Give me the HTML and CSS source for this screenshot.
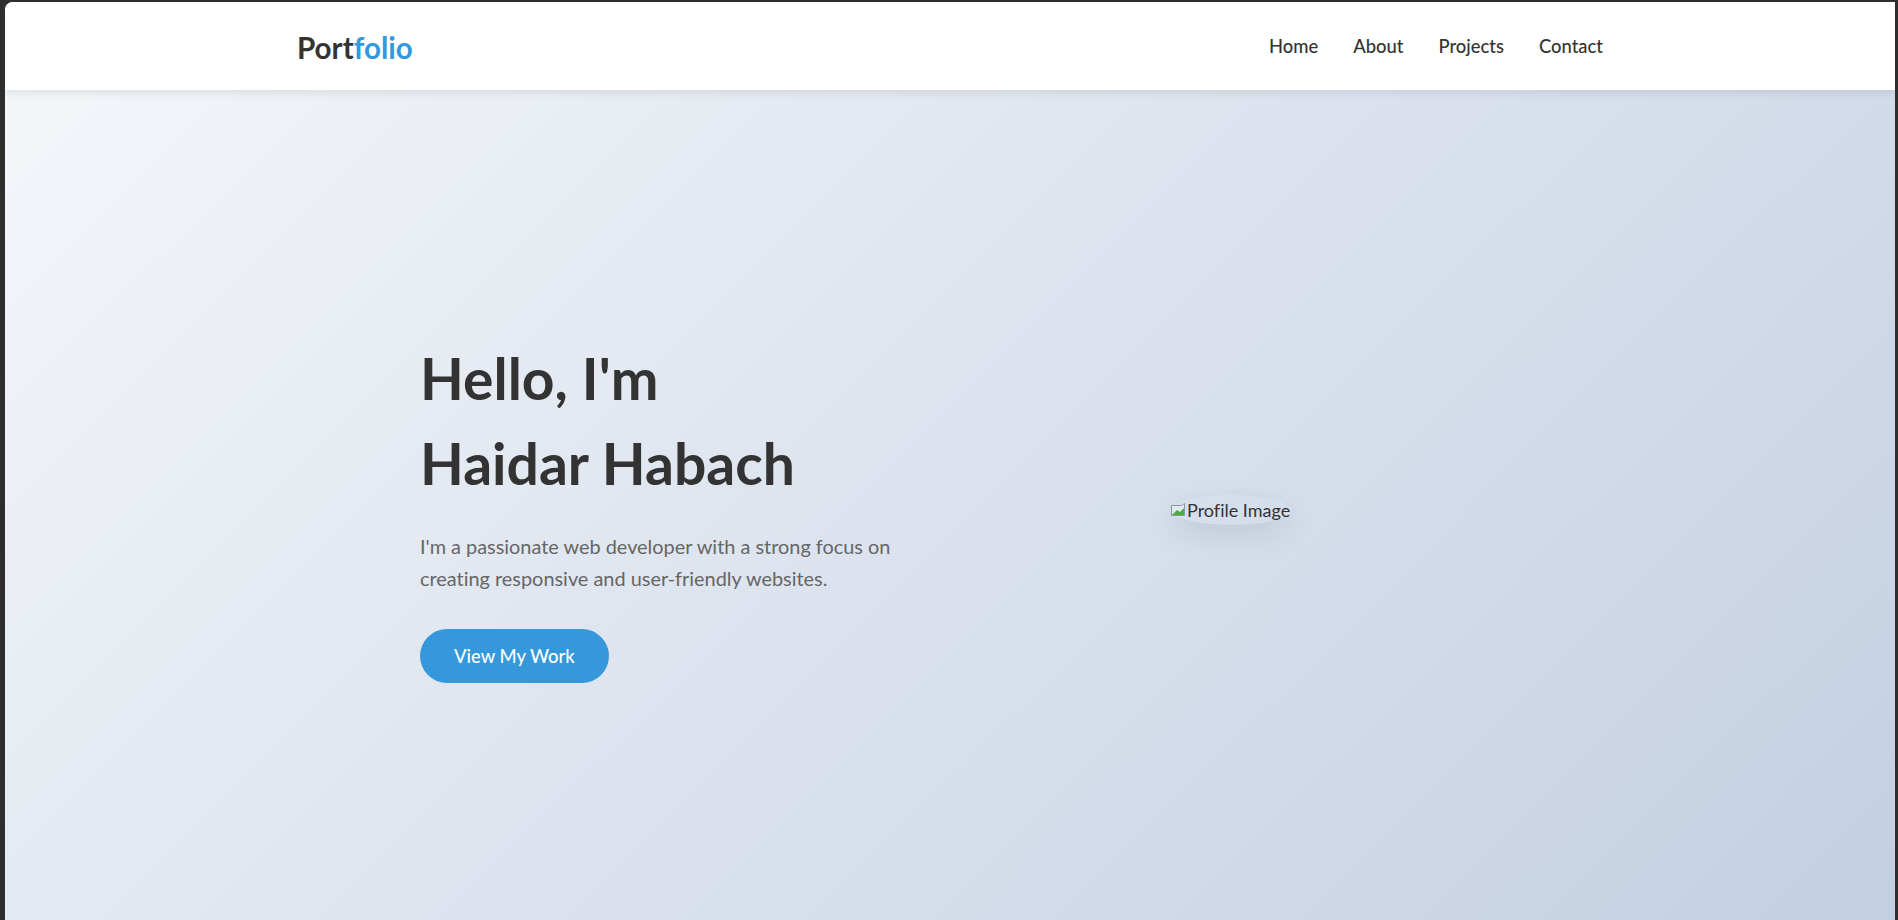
FILE: index.html
```html
<!DOCTYPE html>
<html lang="en">
<head>
<meta charset="utf-8">
<title>Portfolio</title>
<link rel="stylesheet" href="styles.css">
</head>
<body>
<div class="window">
  <header class="site-header">
    <div class="header-inner">
      <a class="logo" href="#">Port<span>folio</span></a>
      <nav class="nav">
        <a href="#">Home</a>
        <a href="#">About</a>
        <a href="#">Projects</a>
        <a href="#">Contact</a>
      </nav>
    </div>
  </header>
  <section class="hero">
    <div class="hero-inner">
      <div class="hero-text">
        <h1><span>Hello, I'm</span><span>Haidar Habach</span></h1>
        <p>I'm a passionate web developer with a strong focus on creating responsive and user-friendly websites.</p>
        <a class="btn" href="#">View My Work</a>
      </div>
      <div class="hero-image">
        <div class="profile">
          <svg class="broken" width="16" height="16" viewBox="0 0 16 16">
            <path d="M1.5 3.5h10l3-2v12h-13z" fill="#dfe8f2" stroke="#8e959c"/>
            <path d="M2 13l5-5 3 2 4-4v7H2z" fill="#4caf3a"/>
          </svg>
          <span>Profile Image</span>
        </div>
      </div>
    </div>
  </section>
</div>
</body>
</html>
```

FILE: styles.css
```css
html, body {
  margin: 0;
  height: 100%;
}
body {
  background: #2e2e2e;
  font-family: "Lato", "Open Sans", sans-serif;
  font-variant-ligatures: none;
  overflow: hidden;
}
.window {
  margin: 2px 3px 0 5px;
  height: 918px;
  border-top-left-radius: 8px;
  overflow: hidden;
  display: flex;
  flex-direction: column;
  background: linear-gradient(135deg, #f5f7fa 0%, #c3cfe2 100%);
}
.site-header {
  flex: none;
  height: 88px;
  background: #fff;
  box-shadow: 0 2px 10px rgba(0, 0, 0, 0.1);
  position: relative;
  z-index: 1;
}
.header-inner {
  width: 1306px;
  margin: 0 auto;
  height: 100%;
  display: flex;
  align-items: center;
  justify-content: space-between;
}
.logo {
  font-size: 29.6px;
  font-weight: 700;
  color: #333;
  text-decoration: none;
  padding-top: 2px;
}
.logo span { color: #3498db; }
.nav {
  display: flex;
  gap: 35px;
}
.nav a {
  color: #333;
  font-size: 18.4px;
  font-weight: 500;
  text-decoration: none;
}
.hero {
  flex: 1;
  padding-top: 246px;
}
.hero-inner {
  width: 1060px;
  margin: 0 auto;
  display: grid;
  grid-template-columns: 1fr 1fr;
  column-gap: 64px;
  align-items: center;
}
.hero-text h1 {
  margin: 0;
  font-size: 57px;
  line-height: 85px;
  font-weight: 700;
  color: #333;
}
.hero-text h1 span { display: block; }
.hero-text p {
  margin: 24px 0 35px;
  max-width: 500px;
  font-size: 19.9px;
  line-height: 32px;
  color: #666;
}
.btn {
  display: inline-block;
  height: 54px;
  line-height: 54px;
  padding: 0 34px;
  border-radius: 50px;
  background: #3498db;
  color: #fff;
  font-size: 18.4px;
  font-weight: 500;
  text-decoration: none;
}
.hero-image {
  display: flex;
  justify-content: center;
}
.profile {
  width: 122px;
  height: 30px;
  border-radius: 50%;
  box-shadow: 0 10px 30px rgba(0, 0, 0, 0.1);
  display: flex;
  align-items: center;
  gap: 1px;
  font-size: 18px;
  color: #333;
}
.broken { flex: none; }
```
